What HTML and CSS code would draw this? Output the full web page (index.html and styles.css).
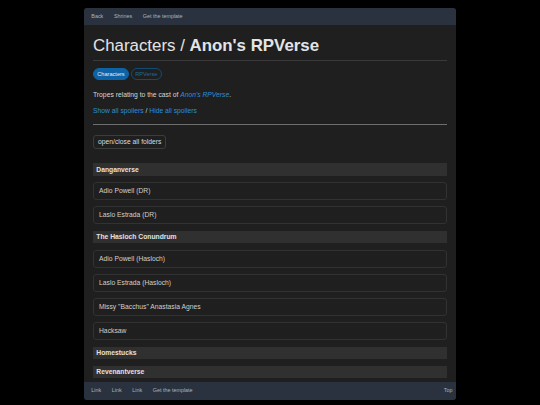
FILE: index.html
```html
<!DOCTYPE html>
<html lang="en">
<head>
<meta charset="utf-8">
<title>Characters / Anon's RPVerse</title>
<link rel="stylesheet" href="styles.css">
</head>
<body>
<div class="window">
  <nav class="topbar">
    <a class="nav-link" href="#">Back</a>
    <a class="nav-link" href="#">Shrines</a>
    <a class="nav-link" href="#">Get the template</a>
  </nav>
  <main class="content">
    <h1 class="title"><span class="title-light">Characters / </span><span class="title-bold">Anon's RPVerse</span></h1>
    <div class="pills">
      <a class="pill pill-active" href="#">Characters</a>
      <a class="pill pill-outline" href="#">RPVerse</a>
    </div>
    <p class="intro">Tropes relating to the cast of <a class="link italic" href="#">Anon's RPVerse</a>.</p>
    <p class="spoilers"><a class="link" href="#">Show all spoilers</a> / <a class="link" href="#">Hide all spoilers</a></p>
    <hr class="rule">
    <button class="folder-btn" type="button">open/close all folders</button>
    <div class="folders">
      <div class="section">Danganverse</div>
      <div class="item">Adio Powell (DR)</div>
      <div class="item">Laslo Estrada (DR)</div>
      <div class="section">The Hasloch Conundrum</div>
      <div class="item">Adio Powell (Hasloch)</div>
      <div class="item">Laslo Estrada (Hasloch)</div>
      <div class="item">Missy "Bacchus" Anastasia Agnes</div>
      <div class="item">Hacksaw</div>
      <div class="section">Homestucks</div>
      <div class="section">Revenantverse</div>
    </div>
  </main>
  <footer class="bottombar">
    <div class="foot-left">
      <a class="nav-link" href="#">Link</a>
      <a class="nav-link" href="#">Link</a>
      <a class="nav-link" href="#">Link</a>
      <a class="nav-link" href="#">Get the template</a>
    </div>
    <a class="nav-link top-link" href="#">Top</a>
  </footer>
</div>
</body>
</html>
```

FILE: styles.css
```css
html, body {
  margin: 0;
  padding: 0;
  background: #000;
}
body {
  padding-top: 8px;
  font-family: "Liberation Sans", Arial, sans-serif;
  font-size: 6.75px;
  color: #d6d6d6;
}
.window {
  width: 372px;
  height: 392px;
  margin: 0 auto;
  background: #1f1f1f;
  border-radius: 3px;
  display: flex;
  flex-direction: column;
  overflow: hidden;
}
.topbar,
.bottombar {
  flex: 0 0 auto;
  height: 17px;
  background: #29323e;
  display: flex;
  align-items: center;
  padding: 0 2px;
  font-size: 5.4px;
}
.bottombar {
  height: 18px;
  justify-content: space-between;
  padding-right: 0;
}
.foot-left {
  display: flex;
  align-items: center;
}
.nav-link {
  display: block;
  color: #aab3bd;
  text-decoration: none;
  padding: 0 5.3px;
  line-height: 1.3;
}
.top-link {
  padding-right: 3.6px;
}
.content {
  flex: 1 1 auto;
  overflow: hidden;
  padding: 0 9px;
}
.title {
  margin: 11.3px 0 0;
  font-size: 16.875px;
  line-height: 20.25px;
  color: #e4e4e4;
  padding-bottom: 3.5px;
  border-bottom: 1px solid #3a3a3a;
}
.title-light {
  font-weight: normal;
}
.title-bold {
  font-weight: bold;
}
.pills {
  display: flex;
  gap: 2px;
  margin-top: 7px;
}
.pill {
  display: block;
  font-size: 5.6px;
  line-height: 10px;
  padding: 0 3.3px;
  border-radius: 6px;
  text-decoration: none;
  border: 1px solid transparent;
}
.pill-active {
  background: #0d63a6;
  border-color: #0d63a6;
  color: #e6eef6;
}
.pill-outline {
  border-color: #114b74;
  color: #1e6aa3;
}
.intro {
  margin: 10.2px 0 0;
  line-height: 10.125px;
}
.spoilers {
  margin: 5.7px 0 0;
  line-height: 10.125px;
}
.link {
  color: #2b8fd8;
  text-decoration: none;
}
.italic {
  font-style: italic;
}
.rule {
  margin: 8.2px 0 0;
  border: 0;
  border-top: 1px solid #6e6e6e;
  height: 0;
}
.folder-btn {
  display: block;
  margin-top: 9.7px;
  font-family: inherit;
  font-size: 6.75px;
  line-height: 10px;
  padding: 1px 4px;
  background: #1f1f1f;
  color: #dcdcdc;
  border: 1px solid #3c3c3c;
  border-radius: 3px;
}
.folders {
  margin-top: 14.3px;
  display: flex;
  flex-direction: column;
  gap: 6.3px;
}
.section {
  background: #303030;
  font-weight: bold;
  color: #e2e2e2;
  line-height: 10px;
  padding: 1.25px 3.3px;
}
.item {
  border: 1px solid #323232;
  border-radius: 3px;
  line-height: 10px;
  padding: 3px 5px;
  color: #cfcfcf;
}
```
